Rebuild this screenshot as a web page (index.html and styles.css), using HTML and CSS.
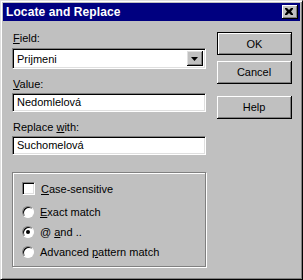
FILE: index.html
```html
<!DOCTYPE html>
<html>
<head>
<meta charset="utf-8">
<link rel="stylesheet" href="styles.css">
</head>
<body>
<div class="window">
  <div class="titlebar">
    <span class="title">Locate and Replace</span>
    <span class="close">
      <svg width="8" height="7" viewBox="0 0 8 7"><path d="M0 0h2l2 2 2-2h2v1l-2 2.5 2 2.5v1h-2l-2-2-2 2h-2v-1l2-2.5-2-2.5z" fill="#000"/></svg>
    </span>
  </div>
  <div class="body">
    <div class="left">
      <div class="label"><u>F</u>ield:</div>
      <div class="combo">
        <span class="combo-text">Prijmeni</span>
        <span class="drop"><svg width="7" height="4" viewBox="0 0 7 4"><path d="M0 0h7l-3.5 4z" fill="#000"/></svg></span>
      </div>
      <div class="label gap"><u>V</u>alue:</div>
      <div class="field">Nedomlelová</div>
      <div class="label gap">Replace <u>w</u>ith:</div>
      <div class="field">Suchomelová</div>
      <div class="group">
        <div class="opt check"><span class="box"></span><span><u>C</u>ase-sensitive</span></div>
        <div class="opt"><span class="radio"></span><span><u>E</u>xact match</span></div>
        <div class="opt"><span class="radio on"></span><span>@ <u>a</u>nd ..</span></div>
        <div class="opt last"><span class="radio"></span><span>Advanced <u>p</u>attern match</span></div>
      </div>
    </div>
    <div class="right">
      <div class="btn default"><span>OK</span></div>
      <div class="btn"><span>Cancel</span></div>
      <div class="btn help"><span>Help</span></div>
    </div>
  </div>
</div>
</body>
</html>
```
FILE: styles.css
```css
html, body {
  margin: 0;
  padding: 0;
  background: #c0c0c0;
}
body {
  font-family: "Liberation Sans", Arial, sans-serif;
  font-size: 11px;
  color: #000;
}
.window {
  width: 303px;
  height: 280px;
  box-sizing: border-box;
  background: #c0c0c0;
  border-top: 1px solid #dfdfdf;
  border-left: 1px solid #dfdfdf;
  border-right: 1px solid #000;
  border-bottom: 1px solid #000;
  box-shadow: inset 1px 1px 0 #fff, inset -1px -1px 0 #808080;
  padding: 2px;
}
.titlebar {
  height: 18px;
  background: #000080;
  color: #fff;
  display: flex;
  align-items: center;
  justify-content: space-between;
  padding: 0 2px 0 3px;
}
.title {
  font-weight: bold;
  font-size: 12px;
  letter-spacing: 0.1px;
}
.close {
  width: 16px;
  height: 14px;
  box-sizing: border-box;
  background: #c0c0c0;
  border-right: 1px solid #000;
  border-bottom: 1px solid #000;
  box-shadow: inset 1px 1px 0 #fff, inset -1px -1px 0 #808080;
  display: flex;
  align-items: center;
  justify-content: center;
  padding-right: 1px;
}
.body {
  display: flex;
  padding: 11px 0 0 9px;
}
.left {
  width: 194px;
}
.label {
  height: 13px;
  line-height: 13px;
  margin-left: 1px;
}
.label.gap {
  margin-top: 9px;
}
.combo, .field {
  box-sizing: border-box;
  background: #fff;
  border-top: 1px solid #808080;
  border-left: 1px solid #808080;
  border-right: 1px solid #fff;
  border-bottom: 1px solid #fff;
  box-shadow: inset 1px 1px 0 #000, inset -1px -1px 0 #dfdfdf;
}
.combo {
  height: 21px;
  display: flex;
  align-items: center;
  justify-content: space-between;
  padding: 2px;
  margin-top: 3px;
}
.combo-text {
  padding-left: 2px;
}
.drop {
  width: 16px;
  height: 15px;
  box-sizing: border-box;
  background: #c0c0c0;
  border-right: 1px solid #000;
  border-bottom: 1px solid #000;
  box-shadow: inset 1px 1px 0 #dfdfdf, inset -1px -1px 0 #808080;
  display: flex;
  align-items: center;
  justify-content: center;
  padding-top: 1px;
}
.field {
  height: 19px;
  line-height: 17px;
  padding-left: 4px;
  margin-top: 2px;
}
.group {
  margin-top: 17px;
  height: 95px;
  box-sizing: border-box;
  border: 1px solid #808080;
  box-shadow: inset 1px 1px 0 #fff, 1px 1px 0 #fff;
  padding: 9px 0 0 9px;
}
.opt {
  display: flex;
  align-items: center;
  height: 13px;
  gap: 5px;
  margin-bottom: 7px;
}
.opt.check {
  margin-bottom: 10px;
}
.box {
  width: 13px;
  height: 13px;
  box-sizing: border-box;
  background: #fff;
  border-top: 1px solid #808080;
  border-left: 1px solid #808080;
  border-right: 1px solid #fff;
  border-bottom: 1px solid #fff;
  box-shadow: inset 1px 1px 0 #000, inset -1px -1px 0 #dfdfdf;
  margin-right: 1px;
}
.radio {
  width: 12px;
  height: 12px;
  box-sizing: border-box;
  border-radius: 50%;
  background: #fff;
  border: 1px solid;
  border-color: #808080 #fff #fff #808080;
  box-shadow: inset 1px 1px 0 #000;
  position: relative;
  margin-right: 1px;
}
.radio.on::after {
  content: "";
  position: absolute;
  left: 3px;
  top: 3px;
  width: 4px;
  height: 4px;
  border-radius: 50%;
  background: #000;
}
.right {
  margin-left: 11px;
  display: flex;
  flex-direction: column;
}
.btn {
  width: 75px;
  height: 23px;
  box-sizing: border-box;
  background: #c0c0c0;
  border-right: 1px solid #000;
  border-bottom: 1px solid #000;
  box-shadow: inset 1px 1px 0 #fff, inset -1px -1px 0 #808080;
  display: flex;
  align-items: center;
  justify-content: center;
  margin-bottom: 6px;
}
.btn.default {
  border: 1px solid #000;
  box-shadow: inset 1px 1px 0 #fff, inset -1px -1px 0 #808080;
}
.btn.help {
  margin-top: 6px;
}
```
